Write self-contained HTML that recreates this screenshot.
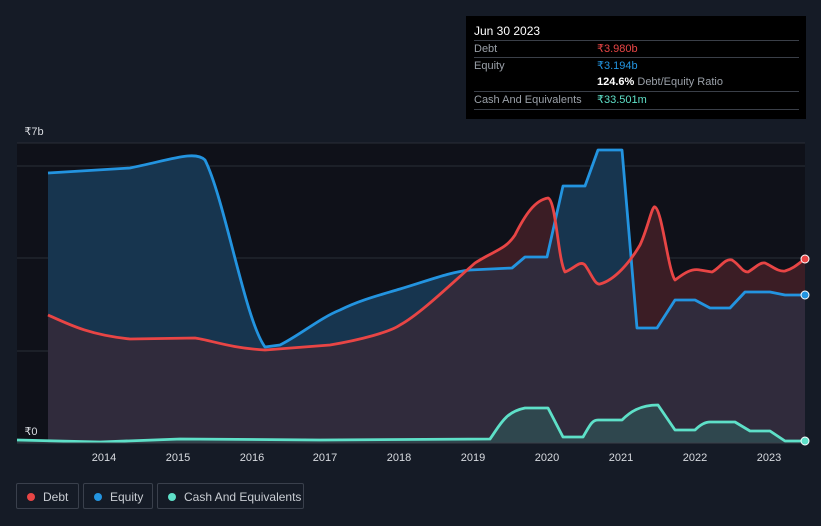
<!DOCTYPE html>
<html><head><meta charset="utf-8"><style>
body{margin:0;width:821px;height:526px;background:#151b26;font-family:"Liberation Sans",sans-serif;overflow:hidden;position:relative}
.tt{position:absolute;left:466px;top:16px;width:340px;height:103px;background:#000;color:#fff;font-size:11px}
.row{position:absolute;left:8px;width:325px;border-top:1px solid #3a3f48;height:17px;line-height:17px}
.lbl{color:#9aa0a8}
.v{position:absolute;left:123px;top:0}
.leg{position:absolute;top:483px;height:26px;border:1px solid #3a404c;border-radius:2px;color:#c8ccd2;font-size:12px;line-height:26px;box-sizing:border-box}
.dot{display:inline-block;width:8px;height:8px;border-radius:50%;margin:0 8px 0 10px;vertical-align:-0px}
</style></head><body>
<svg width="821" height="526" style="position:absolute;left:0;top:0">
<defs>
<path id="eq" d="M48,173 L130,168 C170,160 195,150 205,160 C225,200 245,320 265,347 L280,345 C300,335 320,318 340,310 C360,300 380,295 400,289 C430,280 450,272 470,270 L512,268 L525,257 L547,257 L563,186 L585,186 L598,150 L622,150 L637,328 L657,328 L675,300 L695,300 L710,308 L730,308 L745,292 L770,292 L785,295 L805,295 L805,443 L48,443 Z"/>
<path id="db" d="M48,315 C70,325 90,335 130,339 L195,338 C210,340 230,348 265,350 L330,345 C360,340 390,332 400,325 C420,314 450,285 475,263 C495,250 505,250 515,235 C525,215 535,200 548,198 C556,200 558,260 565,272 C575,268 580,260 585,265 C592,275 595,285 600,284 C615,280 630,262 640,245 C648,228 652,205 655,207 C662,210 668,270 675,280 C682,275 690,268 700,270 L712,272 C720,268 725,258 732,260 C740,265 742,272 748,272 C755,268 760,262 765,263 C772,266 778,272 785,271 C795,268 800,262 805,259 L805,443 L48,443 Z"/>
<clipPath id="ceq"><use href="#eq"/></clipPath>
<linearGradient id="gp" x1="0" y1="0" x2="0" y2="1"><stop offset="0" stop-color="#453247"/><stop offset="1" stop-color="#2c2a3a"/></linearGradient>
</defs>
<rect x="17" y="143" width="788" height="300" fill="#0f1119"/>
<line x1="17" y1="143" x2="805" y2="143" stroke="#2a2e38"/>
<line x1="17" y1="166" x2="805" y2="166" stroke="#2a2e38"/>
<line x1="17" y1="258" x2="805" y2="258" stroke="#2a2e38"/>
<line x1="17" y1="351" x2="805" y2="351" stroke="#2a2e38"/>
<use href="#eq" fill="#17354f"/>
<use href="#db" fill="#3b1d25"/>
<use href="#db" fill="#302b3c" clip-path="url(#ceq)"/>
<g stroke-linejoin="round">
<path d="M17,440 L100,442 L180,439 L320,440 L490,439 C500,425 505,412 525,408 L548,408 L563,437 L583,437 C590,425 592,420 598,420 L622,420 C630,412 640,405 658,405 L675,430 L695,430 C700,425 705,422 710,422 L735,422 L750,431 L770,431 L785,441 L805,441 L805,443 L17,443 Z" fill="#2f5a5a" fill-opacity="0.6"/>
<path d="M48,173 L130,168 C170,160 195,150 205,160 C225,200 245,320 265,347 L280,345 C300,335 320,318 340,310 C360,300 380,295 400,289 C430,280 450,272 470,270 L512,268 L525,257 L547,257 L563,186 L585,186 L598,150 L622,150 L637,328 L657,328 L675,300 L695,300 L710,308 L730,308 L745,292 L770,292 L785,295 L805,295" fill="none" stroke="#2394e0" stroke-width="2.8"/>
<path d="M48,315 C70,325 90,335 130,339 L195,338 C210,340 230,348 265,350 L330,345 C360,340 390,332 400,325 C420,314 450,285 475,263 C495,250 505,250 515,235 C525,215 535,200 548,198 C556,200 558,260 565,272 C575,268 580,260 585,265 C592,275 595,285 600,284 C615,280 630,262 640,245 C648,228 652,205 655,207 C662,210 668,270 675,280 C682,275 690,268 700,270 L712,272 C720,268 725,258 732,260 C740,265 742,272 748,272 C755,268 760,262 765,263 C772,266 778,272 785,271 C795,268 800,262 805,259" fill="none" stroke="#e84545" stroke-width="2.8"/>
<path d="M17,440 L100,442 L180,439 L320,440 L490,439 C500,425 505,412 525,408 L548,408 L563,437 L583,437 C590,425 592,420 598,420 L622,420 C630,412 640,405 658,405 L675,430 L695,430 C700,425 705,422 710,422 L735,422 L750,431 L770,431 L785,441 L805,441" fill="none" stroke="#5ee0c8" stroke-width="2.8"/>
</g>
<line x1="17" y1="443" x2="805" y2="443" stroke="#3a3f48"/>
<circle cx="805" cy="259" r="4" fill="#e84545" stroke="#fff"/>
<circle cx="805" cy="295" r="4" fill="#2394e0" stroke="#fff"/>
<circle cx="805" cy="441" r="4" fill="#5ee0c8" stroke="#fff"/>
<g fill="#d8dbe0" font-size="11" font-family="Liberation Sans" text-anchor="middle">
<text x="104" y="461">2014</text><text x="178" y="461">2015</text><text x="252" y="461">2016</text><text x="325" y="461">2017</text><text x="399" y="461">2018</text><text x="473" y="461">2019</text><text x="547" y="461">2020</text><text x="621" y="461">2021</text><text x="695" y="461">2022</text><text x="769" y="461">2023</text>
<text x="34" y="135">₹7b</text><text x="31" y="435">₹0</text>
</g>
</svg>
<div class="tt">
<div style="position:absolute;left:8px;top:8px;font-size:12px">Jun 30 2023</div>
<div class="row" style="top:24px"><span class="lbl">Debt</span><span class="v" style="color:#e84545">₹3.980b</span></div>
<div class="row" style="top:41px"><span class="lbl">Equity</span><span class="v" style="color:#2394e0">₹3.194b</span></div>
<div class="row" style="top:58px;border-top:none"><span class="v"><b>124.6%</b> <span class="lbl">Debt/Equity Ratio</span></span></div>
<div class="row" style="top:75px"><span class="lbl">Cash And Equivalents</span><span class="v" style="color:#5ee0c8">₹33.501m</span></div>
<div class="row" style="top:93px;height:0"></div>
</div>
<div class="leg" style="left:16px;width:63px"><span class="dot" style="background:#e84545"></span>Debt</div>
<div class="leg" style="left:83px;width:70px"><span class="dot" style="background:#2394e0"></span>Equity</div>
<div class="leg" style="left:157px;width:147px"><span class="dot" style="background:#5ee0c8"></span>Cash And Equivalents</div>
</body></html>
